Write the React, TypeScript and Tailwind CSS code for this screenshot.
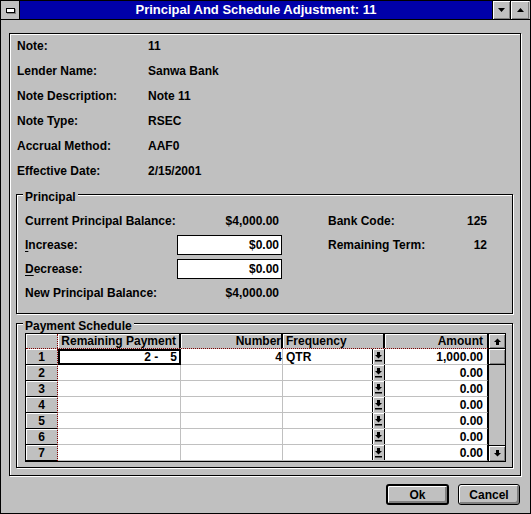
import React from "react";

const bevel = "shadow-[inset_1px_1px_0_#ffffff,inset_-1px_-1px_0_#808080]";
const hl = "shadow-[inset_1px_1px_0_#ffffff]";
const etched = "border border-black shadow-[1px_1px_0_#ffffff,inset_1px_1px_0_#ffffff]";

function TriDown() {
  return (
    <svg width="7" height="4" viewBox="0 0 7 4" className="block">
      <polygon points="0,0 7,0 3.5,4" fill="#000" />
    </svg>
  );
}
function TriUp() {
  return (
    <svg width="7" height="4" viewBox="0 0 7 4" className="block">
      <polygon points="3.5,0 7,4 0,4" fill="#000" />
    </svg>
  );
}
function ScrollUp() {
  return (
    <svg width="7" height="7" viewBox="0 0 7 7" className="block">
      <polygon points="3.5,0.5 7,4 0,4" fill="#000" />
      <rect x="2" y="4" width="3" height="3" fill="#000" />
    </svg>
  );
}
function ScrollDown() {
  return (
    <svg width="7" height="7" viewBox="0 0 7 7" className="block">
      <rect x="2" y="0" width="3" height="3" fill="#000" />
      <polygon points="0,3 7,3 3.5,6.5" fill="#000" />
    </svg>
  );
}
function ComboArrow() {
  return (
    <svg width="7" height="10" viewBox="0 0 7 10" className="block">
      <rect x="2" y="0" width="3" height="3" fill="#000" />
      <polygon points="0,3 7,3 3.5,6.5" fill="#000" />
      <rect x="0" y="8" width="7" height="1.5" fill="#000" />
    </svg>
  );
}

const info: [string, string][] = [
  ["Note:", "11"],
  ["Lender Name:", "Sanwa Bank"],
  ["Note Description:", "Note 11"],
  ["Note Type:", "RSEC"],
  ["Accrual Method:", "AAF0"],
  ["Effective Date:", "2/15/2001"],
];

type Row = { n: string; sel?: boolean; num?: string; freq?: string; amt: string };
const rows: Row[] = [
  { n: "1", sel: true, num: "4", freq: "QTR", amt: "1,000.00" },
  { n: "2", amt: "0.00" },
  { n: "3", amt: "0.00" },
  { n: "4", amt: "0.00" },
  { n: "5", amt: "0.00" },
  { n: "6", amt: "0.00" },
  { n: "7", amt: "0.00" },
];

export default function App() {
  return (
    <div className="w-[531px] h-[514px] bg-[#c0c0c0] border border-black flex flex-col font-['Liberation_Sans',Arial,sans-serif] font-bold text-[12px] leading-[14px] text-black select-none overflow-hidden">
      {/* Title bar */}
      <div className="h-[19px] shrink-0 flex border-b border-black">
        <div className="w-[19px] h-full border-r border-black bg-[#c0c0c0] flex items-center justify-center">
          <div className="w-[9px] h-[5px] bg-white border border-black shadow-[1px_1px_0_#808080]" />
        </div>
        <div className="flex-1 h-full bg-[#0000a8] text-white text-[13px] leading-[18px] flex items-center justify-center">
          Principal And Schedule Adjustment: 11
        </div>
        <div className={`w-[18px] h-full border-l border-black bg-[#c0c0c0] ${bevel} flex items-center justify-center`}>
          <TriDown />
        </div>
        <div className={`w-[19px] h-full border-l border-black bg-[#c0c0c0] ${bevel} flex items-center justify-center`}>
          <TriUp />
        </div>
        <div className="w-[1px] h-full bg-[#c0c0c0]" />
      </div>

      {/* Main panel */}
      <div className={`ml-[8px] mt-[13px] w-[512px] h-[443px] shrink-0 ${etched} flex flex-col pt-[5px]`}>
        <div className="flex flex-col pl-[7px]">
          {info.map(([l, v]) => (
            <div key={l} className="flex h-[25px]">
              <div className="w-[131px]">{l}</div>
              <div>{v}</div>
            </div>
          ))}
        </div>

        {/* Principal group */}
        <div className={`relative ml-[6px] mt-[5px] w-[497px] h-[120px] shrink-0 ${etched} pt-[14px] pl-[8px]`}>
          <div className="absolute -top-[5px] left-[6px] px-[2px] bg-[#c0c0c0]">Principal</div>
          <div className="flex h-[24px] items-center">
            <div className="w-[152px]">Current Principal Balance:</div>
            <div className="w-[105px] text-right pr-[3px]">$4,000.00</div>
            <div className="ml-[46px] w-[159px] flex justify-between">
              <span>Bank Code:</span>
              <span>125</span>
            </div>
          </div>
          <div className="flex h-[24px] items-center">
            <div className="w-[152px]">
              <span className="underline underline-offset-[2px]">I</span>ncrease:
            </div>
            <div className="w-[105px] h-[20px] bg-white border border-black flex items-center justify-end pr-[2px]">
              $0.00
            </div>
            <div className="ml-[46px] w-[159px] flex justify-between">
              <span>Remaining Term:</span>
              <span>12</span>
            </div>
          </div>
          <div className="flex h-[24px] items-center">
            <div className="w-[152px]">
              <span className="underline underline-offset-[2px]">D</span>ecrease:
            </div>
            <div className="w-[105px] h-[20px] bg-white border border-black flex items-center justify-end pr-[2px]">
              $0.00
            </div>
          </div>
          <div className="flex h-[24px] items-center">
            <div className="w-[152px]">New Principal Balance:</div>
            <div className="w-[105px] text-right pr-[3px]">$4,000.00</div>
          </div>
        </div>

        {/* Payment schedule group */}
        <div className={`relative ml-[6px] mt-[9px] w-[497px] h-[145px] shrink-0 ${etched}`}>
          <div className="absolute -top-[5px] left-[6px] px-[2px] bg-[#c0c0c0]">Payment Schedule</div>
          <div className="flex ml-[8px] mt-[9px]">
            {/* table */}
            <div className="w-[463px] h-[129px] border-l border-t border-b border-black flex flex-col">
              {/* header */}
              <div className="flex h-[15px] border-b border-dotted border-[#800000]">
                <div className={`w-[32px] h-full bg-[#c0c0c0] border-r border-dotted border-[#800000] ${hl}`} />
                <div className={`w-[123px] h-full bg-[#c0c0c0] border-r-2 border-black ${hl} text-right pr-[3px] leading-[13px] pt-[1px]`}>
                  Remaining Payment
                </div>
                <div className={`w-[102px] h-full bg-[#c0c0c0] border-r-2 border-black ${hl} text-right leading-[13px] pt-[1px]`}>
                  Number
                </div>
                <div className={`w-[102px] h-full bg-[#c0c0c0] border-r-2 border-black ${hl} pl-[3px] leading-[13px] pt-[1px]`}>
                  Frequency
                </div>
                <div className={`w-[103px] h-full bg-[#c0c0c0] border-r border-black ${hl} text-right pr-[4px] leading-[13px] pt-[1px]`}>
                  Amount
                </div>
              </div>
              {/* body */}
              <div className="flex flex-1">
                <div className="w-[32px] border-r border-dotted border-[#800000] flex flex-col">
                  {rows.map((r) => (
                    <div
                      key={r.n}
                      className={`h-[16px] shrink-0 border-b border-black bg-[#c0c0c0] ${hl} text-center pt-[1px]`}
                    >
                      {r.n}
                    </div>
                  ))}
                </div>
                <div className="flex flex-col">
                  {rows.map((r) => (
                    <div key={r.n} className="flex h-[16px] shrink-0">
                      {r.sel ? (
                        <div className="w-[123px] h-full bg-white border-2 border-black flex justify-end items-center pr-[2px]">
                          <span>2 -</span>
                          <span className="ml-[12px]">5</span>
                        </div>
                      ) : (
                        <div className="w-[123px] h-full bg-white border-r border-b border-[#c0c0c0]" />
                      )}
                      <div className="w-[102px] h-full bg-white border-r border-b border-[#c0c0c0] text-right pt-[1px]">
                        {r.num ?? ""}
                      </div>
                      <div className="w-[102px] h-full bg-white border-b border-[#c0c0c0] flex">
                        <div className="flex-1 pl-[3px] pt-[1px]">{r.freq ?? ""}</div>
                        <div className={`w-[13px] h-full border-l border-r border-black bg-[#c0c0c0] ${hl} flex items-center justify-center`}>
                          <ComboArrow />
                        </div>
                      </div>
                      <div className="w-[103px] h-full bg-white border-b border-b-[#c0c0c0] border-r border-r-black text-right pr-[4px] pt-[1px]">
                        {r.amt}
                      </div>
                    </div>
                  ))}
                </div>
              </div>
            </div>
            {/* scrollbar */}
            <div className="w-[18px] h-[129px] border border-black flex flex-col bg-[#c0c0c0]">
              <div className={`h-[15px] shrink-0 border-b border-black ${bevel} flex items-center justify-center`}>
                <ScrollUp />
              </div>
              <div className={`h-[16px] shrink-0 border-b border-black ${bevel}`} />
              <div className="flex-1" />
              <div className={`h-[16px] shrink-0 border-t border-black ${bevel} flex items-center justify-center`}>
                <ScrollDown />
              </div>
            </div>
          </div>
        </div>
      </div>

      {/* Buttons */}
      <div className="mt-[8px] flex justify-end gap-[9px] pr-[10px]">
        <div className="w-[63px] h-[21px] border-2 border-black rounded-[3px] bg-[#c0c0c0] shadow-[inset_1px_1px_0_#ffffff,inset_-2px_-2px_0_#808080] flex items-center justify-center">
          Ok
        </div>
        <div className="w-[62px] h-[21px] border border-black rounded-[3px] bg-[#c0c0c0] shadow-[inset_1px_1px_0_#ffffff,inset_-2px_-2px_0_#808080] flex items-center justify-center">
          Cancel
        </div>
      </div>
    </div>
  );
}
